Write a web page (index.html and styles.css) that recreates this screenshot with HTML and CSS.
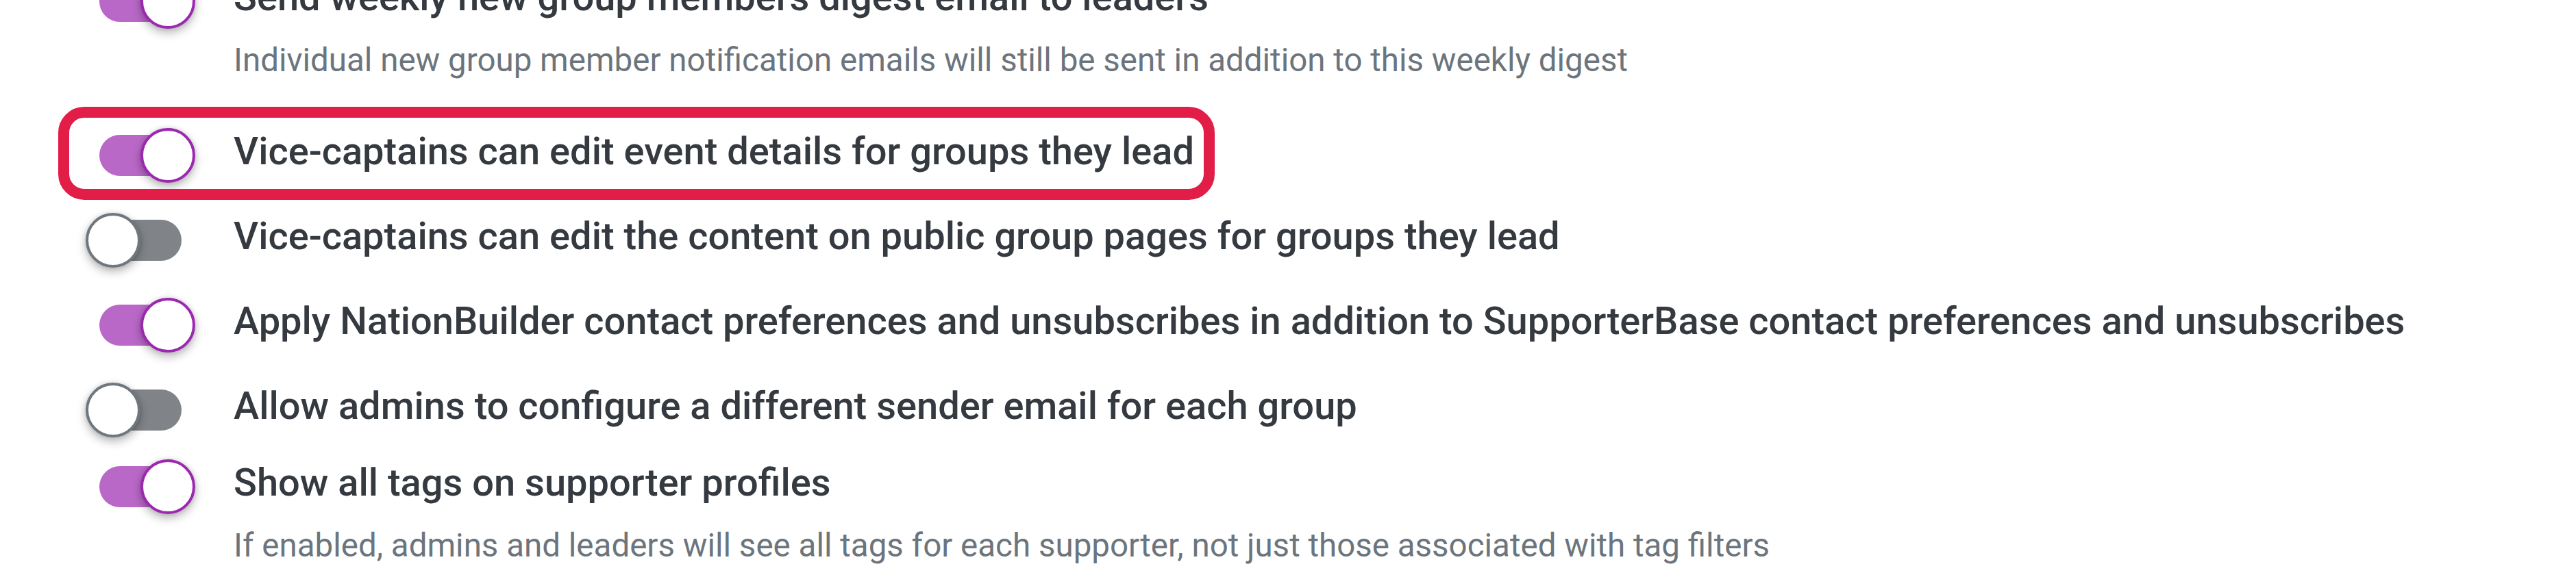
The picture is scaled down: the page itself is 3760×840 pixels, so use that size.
FILE: index.html
```html
<!DOCTYPE html>
<html lang="en">
<head>
<meta charset="utf-8">
<title>Group settings</title>
<link rel="stylesheet" href="styles.css">
</head>
<body>
<div class="settings">
  <div class="setting setting-with-help">
    <div class="row">
      <span class="switch on" role="switch" aria-checked="true"><span class="track"></span><span class="knob"></span></span>
      <div class="text">
        <div class="label">Send weekly new group members digest email to leaders</div>
        <div class="help">Individual new group member notification emails will still be sent in addition to this weekly digest</div>
      </div>
    </div>
  </div>
  <div class="setting">
    <div class="row highlighted">
      <span class="switch on" role="switch" aria-checked="true"><span class="track"></span><span class="knob"></span></span>
      <div class="text">
        <div class="label">Vice-captains can edit event details for groups they lead</div>
      </div>
    </div>
  </div>
  <div class="setting">
    <div class="row">
      <span class="switch off" role="switch" aria-checked="false"><span class="track"></span><span class="knob"></span></span>
      <div class="text">
        <div class="label">Vice-captains can edit the content on public group pages for groups they lead</div>
      </div>
    </div>
  </div>
  <div class="setting">
    <div class="row">
      <span class="switch on" role="switch" aria-checked="true"><span class="track"></span><span class="knob"></span></span>
      <div class="text">
        <div class="label">Apply NationBuilder contact preferences and unsubscribes in addition to SupporterBase contact preferences and unsubscribes</div>
      </div>
    </div>
  </div>
  <div class="setting">
    <div class="row">
      <span class="switch off" role="switch" aria-checked="false"><span class="track"></span><span class="knob"></span></span>
      <div class="text">
        <div class="label">Allow admins to configure a different sender email for each group</div>
      </div>
    </div>
  </div>
  <div class="setting setting-tight">
    <div class="row">
      <span class="switch on" role="switch" aria-checked="true"><span class="track"></span><span class="knob"></span></span>
      <div class="text">
        <div class="label">Show all tags on supporter profiles</div>
        <div class="help">If enabled, admins and leaders will see all tags for each supporter, not just those associated with tag filters</div>
      </div>
    </div>
  </div>
</div>
</body>
</html>
```

FILE: styles.css
```css
html, body {
  margin: 0;
  padding: 0;
  background: #ffffff;
}

body {
  font-family: Roboto, "Liberation Sans", Arial, sans-serif;
  color: #343a40;
  overflow: hidden;
}

.settings {
  display: flex;
  flex-direction: column;
  gap: 44px;
  padding-left: 125px;
  margin-top: -38px;
}

.setting-with-help {
  margin-bottom: 27px;
}

.setting-tight {
  margin-top: -12px;
}

.row {
  display: flex;
  align-items: flex-start;
  width: fit-content;
}

.row.highlighted {
  position: relative;
}

.row.highlighted::after {
  content: "";
  position: absolute;
  top: -31px;
  right: -30px;
  bottom: -25px;
  left: -40px;
  border: 16px solid #e11d48;
  border-radius: 38px;
  pointer-events: none;
}

.switch {
  position: relative;
  flex: 0 0 auto;
  width: 160px;
  height: 80px;
}

.track {
  position: absolute;
  left: 20px;
  top: 10px;
  width: 120px;
  height: 60px;
  border-radius: 30px;
}

.knob {
  position: absolute;
  top: 0;
  width: 80px;
  height: 80px;
  box-sizing: border-box;
  border-radius: 50%;
  background: #ffffff;
  border: 4px solid;
  box-shadow: 0 6px 14px rgba(0, 0, 0, 0.28), 0 0 6px rgba(0, 0, 0, 0.12);
}

.switch.on .track {
  background: #ba68c8;
}

.switch.on .knob {
  left: 80px;
  border-color: #9c27b0;
}

.switch.off .track {
  background: #808488;
}

.switch.off .knob {
  left: 0;
  border-color: #6f777e;
}

.text {
  margin-left: 56px;
  padding-top: 2px;
}

.label {
  font-size: 56px;
  font-weight: 500;
  line-height: 64px;
  white-space: nowrap;
  color: #343a40;
}

.help {
  margin-top: 32px;
  font-size: 47.5px;
  font-weight: 400;
  line-height: 56px;
  white-space: nowrap;
  color: #6c757d;
}
```
